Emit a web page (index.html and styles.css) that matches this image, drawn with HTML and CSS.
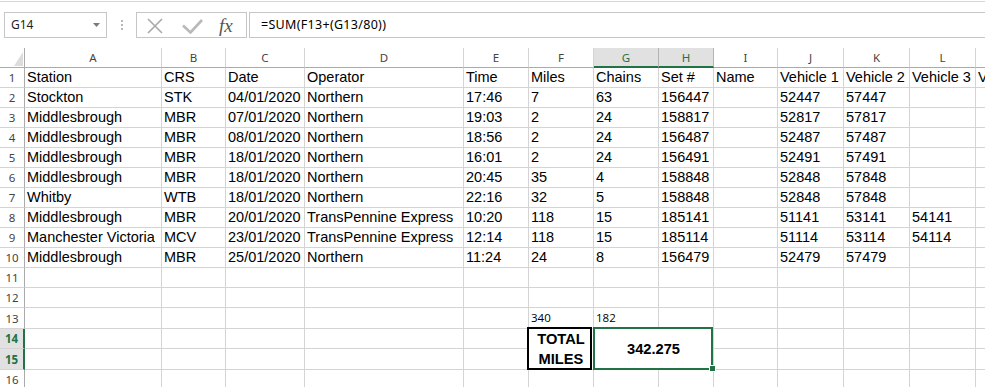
FILE: index.html
```html
<!DOCTYPE html>
<html>
<head>
<meta charset="utf-8">
<title>Sheet</title>
<link rel="stylesheet" href="styles.css">
</head>
<body>
<div class="app">
  <div class="topline"></div>
  <div class="fbar">
    <div class="namebox">
      <span class="ref">G14</span>
      <svg class="dd" viewBox="0 0 7 4"><path d="M0 0H7L3.5 4Z" fill="#7a7a7a"/></svg>
    </div>
    <div class="grip"><i></i><i></i><i></i></div>
    <div class="fxbox">
      <svg class="ic-x" viewBox="0 0 16 16"><path d="M1 1L15 15M15 1L1 15" stroke="#a9a9a9" stroke-width="1.6" fill="none"/></svg>
      <svg class="ic-check" viewBox="0 0 21 15"><path d="M1 6.5L8.5 13.5L20 1" stroke="#b9b9b9" stroke-width="2.6" fill="none"/></svg>
      <span class="fx">fx</span>
    </div>
    <div class="formula">=SUM(F13+(G13/80))</div>
  </div>

  <div class="sheet">
    <div class="corner"><svg class="tri" viewBox="0 0 9 14"><path d="M9 0V14H0Z" fill="#dcdcdc"/></svg></div>
    <div class="h">A</div><div class="h">B</div><div class="h">C</div><div class="h">D</div><div class="h">E</div><div class="h">F</div><div class="h sel">G</div><div class="h sel">H</div><div class="h">I</div><div class="h">J</div><div class="h">K</div><div class="h">L</div><div class="h">M</div>

    <div class="r">1</div><div class="c">Station</div><div class="c">CRS</div><div class="c">Date</div><div class="c">Operator</div><div class="c">Time</div><div class="c">Miles</div><div class="c">Chains</div><div class="c">Set #</div><div class="c">Name</div><div class="c">Vehicle 1</div><div class="c">Vehicle 2</div><div class="c">Vehicle 3</div><div class="c">Vehicle 4</div>

    <div class="r">2</div><div class="c">Stockton</div><div class="c">STK</div><div class="c">04/01/2020</div><div class="c">Northern</div><div class="c">17:46</div><div class="c">7</div><div class="c">63</div><div class="c">156447</div><div class="c"></div><div class="c">52447</div><div class="c">57447</div><div class="c"></div><div class="c"></div>

    <div class="r">3</div><div class="c">Middlesbrough</div><div class="c">MBR</div><div class="c">07/01/2020</div><div class="c">Northern</div><div class="c">19:03</div><div class="c">2</div><div class="c">24</div><div class="c">158817</div><div class="c"></div><div class="c">52817</div><div class="c">57817</div><div class="c"></div><div class="c"></div>

    <div class="r">4</div><div class="c">Middlesbrough</div><div class="c">MBR</div><div class="c">08/01/2020</div><div class="c">Northern</div><div class="c">18:56</div><div class="c">2</div><div class="c">24</div><div class="c">156487</div><div class="c"></div><div class="c">52487</div><div class="c">57487</div><div class="c"></div><div class="c"></div>

    <div class="r">5</div><div class="c">Middlesbrough</div><div class="c">MBR</div><div class="c">18/01/2020</div><div class="c">Northern</div><div class="c">16:01</div><div class="c">2</div><div class="c">24</div><div class="c">156491</div><div class="c"></div><div class="c">52491</div><div class="c">57491</div><div class="c"></div><div class="c"></div>

    <div class="r">6</div><div class="c">Middlesbrough</div><div class="c">MBR</div><div class="c">18/01/2020</div><div class="c">Northern</div><div class="c">20:45</div><div class="c">35</div><div class="c">4</div><div class="c">158848</div><div class="c"></div><div class="c">52848</div><div class="c">57848</div><div class="c"></div><div class="c"></div>

    <div class="r">7</div><div class="c">Whitby</div><div class="c">WTB</div><div class="c">18/01/2020</div><div class="c">Northern</div><div class="c">22:16</div><div class="c">32</div><div class="c">5</div><div class="c">158848</div><div class="c"></div><div class="c">52848</div><div class="c">57848</div><div class="c"></div><div class="c"></div>

    <div class="r">8</div><div class="c">Middlesbrough</div><div class="c">MBR</div><div class="c">20/01/2020</div><div class="c">TransPennine Express</div><div class="c">10:20</div><div class="c">118</div><div class="c">15</div><div class="c">185141</div><div class="c"></div><div class="c">51141</div><div class="c">53141</div><div class="c">54141</div><div class="c"></div>

    <div class="r">9</div><div class="c">Manchester Victoria</div><div class="c">MCV</div><div class="c">23/01/2020</div><div class="c">TransPennine Express</div><div class="c">12:14</div><div class="c">118</div><div class="c">15</div><div class="c">185114</div><div class="c"></div><div class="c">51114</div><div class="c">53114</div><div class="c">54114</div><div class="c"></div>

    <div class="r">10</div><div class="c">Middlesbrough</div><div class="c">MBR</div><div class="c">25/01/2020</div><div class="c">Northern</div><div class="c">11:24</div><div class="c">24</div><div class="c">8</div><div class="c">156479</div><div class="c"></div><div class="c">52479</div><div class="c">57479</div><div class="c"></div><div class="c"></div>

    <div class="r">11</div><div class="c"></div><div class="c"></div><div class="c"></div><div class="c"></div><div class="c"></div><div class="c"></div><div class="c"></div><div class="c"></div><div class="c"></div><div class="c"></div><div class="c"></div><div class="c"></div><div class="c"></div>

    <div class="r">12</div><div class="c"></div><div class="c"></div><div class="c"></div><div class="c"></div><div class="c"></div><div class="c"></div><div class="c"></div><div class="c"></div><div class="c"></div><div class="c"></div><div class="c"></div><div class="c"></div><div class="c"></div>

    <div class="r r13">13</div><div class="c"></div><div class="c"></div><div class="c"></div><div class="c"></div><div class="c"></div><div class="c s">340</div><div class="c s">182</div><div class="c"></div><div class="c"></div><div class="c"></div><div class="c"></div><div class="c"></div><div class="c"></div>

    <div class="r sel">14</div><div class="c"></div><div class="c"></div><div class="c"></div><div class="c"></div><div class="c"></div><div class="c mf">TOTAL<br>MILES</div><div class="c mgh">342.275<span class="handle"></span></div><div class="c"></div><div class="c"></div><div class="c"></div><div class="c"></div><div class="c"></div>

    <div class="r sel r15">15</div><div class="c"></div><div class="c"></div><div class="c"></div><div class="c"></div><div class="c"></div><div class="c"></div><div class="c"></div><div class="c"></div><div class="c"></div><div class="c"></div>

    <div class="r">16</div><div class="c"></div><div class="c"></div><div class="c"></div><div class="c"></div><div class="c"></div><div class="c"></div><div class="c"></div><div class="c"></div><div class="c"></div><div class="c"></div><div class="c"></div><div class="c"></div><div class="c"></div>
  </div>
</div>
</body>
</html>
```

FILE: styles.css
```css
* { box-sizing: border-box; margin: 0; padding: 0; }
html, body { background: #fff; }
body {
  width: 985px;
  height: 387px;
  overflow: hidden;
  font-family: "Liberation Sans", Arial, sans-serif;
}
.app { padding-top: 1px; }
.topline { border-top: 1px solid #d6d6d6; }

/* formula bar */
.fbar {
  display: flex;
  height: 26px;
  margin-top: 10px;
}
.namebox {
  margin-left: 4px;
  width: 103px;
  border: 1px solid #c6c6c6;
  display: flex;
  align-items: center;
  padding: 0 6px;
}
.ref {
  flex: 1;
  font: 12px/24px "Noto Sans", sans-serif;
  color: #222;
}
.dd { width: 7px; height: 4px; }
.grip {
  width: 29px;
  display: flex;
  flex-direction: column;
  align-items: center;
  justify-content: center;
  gap: 2px;
}
.grip i { display: block; width: 2px; height: 2px; background: #b8b8b8; }
.fxbox {
  width: 111px;
  border: 1px solid #c6c6c6;
  display: flex;
  align-items: center;
  padding-left: 10px;
}
.ic-x { width: 16px; height: 16px; margin-top: 2px; }
.ic-check { width: 21px; height: 15px; margin-left: 19px; margin-top: 3px; }
.fx {
  margin-left: 16px;
  font: italic 19px/24px "Liberation Serif", serif;
  color: #555;
  padding-top: 1px;
}
.formula {
  flex: 1;
  margin-left: 2px;
  margin-right: -10px;
  border: 1px solid #c6c6c6;
  padding-left: 11px;
  font: 12.5px/24px "Noto Sans", sans-serif;
  letter-spacing: 0.3px;
  color: #000;
}

/* sheet grid */
.sheet {
  margin-top: 10px;
  display: grid;
  grid-template-columns: 25px 137px 64px 79px 159px 65px 65px 65px 55px 64px 66px 66px 66px 80px;
  grid-template-rows: repeat(13, 20px) 21px 20px 21px 20px;
}
.corner {
  border-right: 1px solid #ababab;
  border-bottom: 1px solid #ababab;
  display: flex;
  justify-content: flex-end;
  align-items: flex-end;
  padding: 0 1px 1px 0;
}
.tri { width: 9px; height: 14px; }
.h {
  border-right: 1px solid #d4d4d4;
  border-bottom: 1px solid #ababab;
  text-align: center;
  font: 11.5px/16px "Noto Sans", sans-serif;
  padding-top: 2px;
  color: #444;
}
.h.sel {
  background: #e1e1e1;
  color: #217346;
  border-bottom: 2px solid #217346;
  border-right-color: #b4b4b4;
}
.r {
  border-right: 1px solid #ababab;
  border-bottom: 1px solid #d4d4d4;
  text-align: center;
  font: 11.5px/19px "Noto Sans", sans-serif;
  color: #444;
}
.r13, .r15 { line-height: 21px; }
.r.sel {
  background: #e1e1e1;
  color: #217346;
  font-weight: bold;
  border-right: 2px solid #217346;
}
.c {
  border-right: 1px solid #d4d4d4;
  border-bottom: 1px solid #d4d4d4;
  font-size: 14.5px;
  line-height: 19px;
  padding-left: 2px;
  white-space: nowrap;
  overflow: hidden;
  color: #000;
}
.c.s {
  font: 11.5px/20px "Open Sans", sans-serif;
}
.c.mf {
  grid-row: span 2;
  position: relative;
  overflow: visible;
  display: flex;
  align-items: center;
  justify-content: center;
  text-align: center;
  padding: 0;
  font: bold 14.67px/20px "Liberation Sans", Arial, sans-serif;
}
.c.mf::after {
  content: "";
  position: absolute;
  top: -2px;
  left: -2px;
  right: 1px;
  bottom: -1px;
  border: 2px solid #000;
}
.c.mgh {
  grid-column: span 2;
  grid-row: span 2;
  position: relative;
  overflow: visible;
  display: flex;
  align-items: center;
  justify-content: center;
  padding: 0;
  font: bold 14.67px/20px "Liberation Sans", Arial, sans-serif;
}
.c.mgh::after {
  content: "";
  position: absolute;
  top: -2px;
  left: -1px;
  right: 0;
  bottom: -1px;
  border: 2px solid #217346;
  z-index: 2;
}
.handle {
  position: absolute;
  right: -3px;
  bottom: -3px;
  width: 7px;
  height: 7px;
  background: #217346;
  border: 1px solid #fff;
  z-index: 3;
}
```
